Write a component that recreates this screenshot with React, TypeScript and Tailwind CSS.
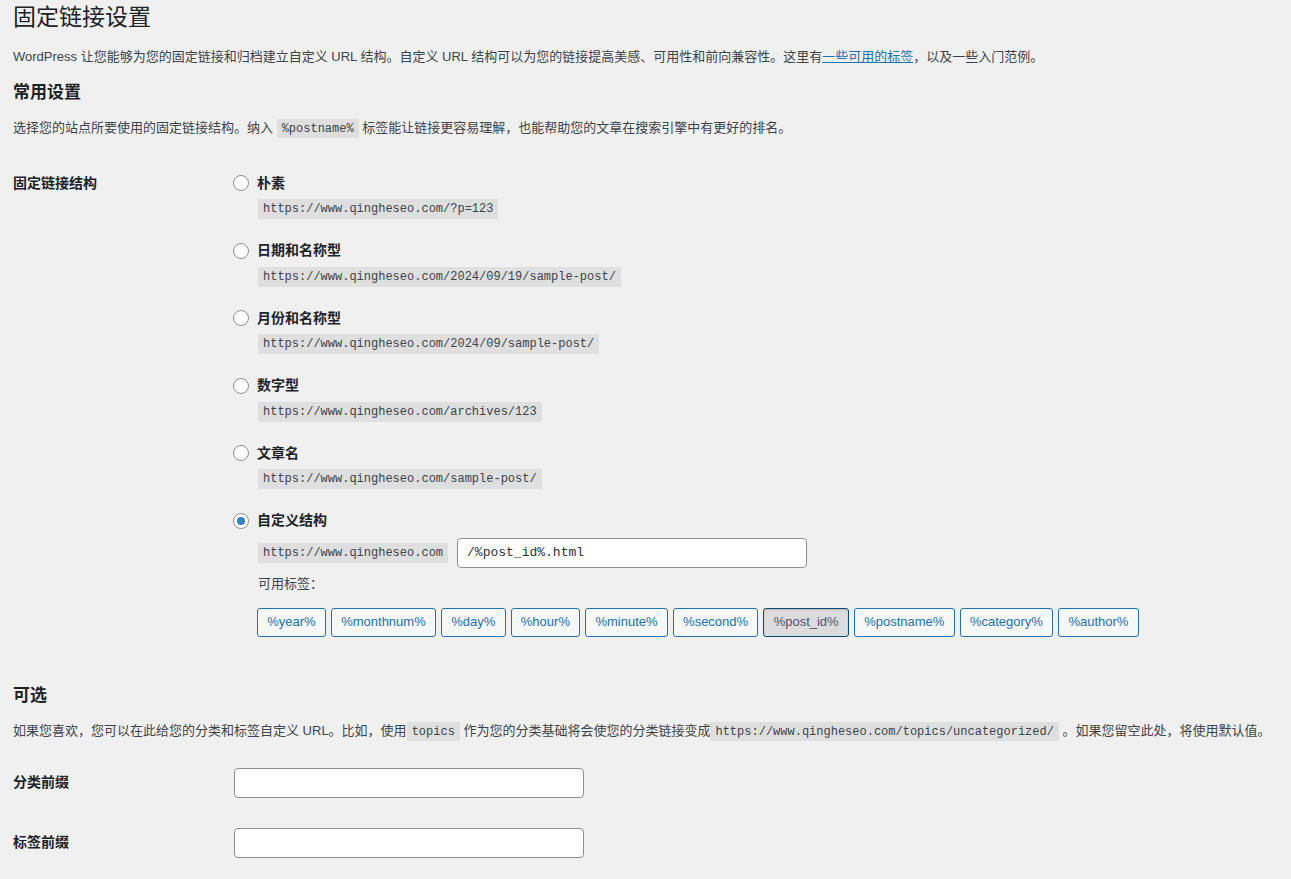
import React from 'react'

const SANS = 'font-["Liberation_Sans","Noto_Sans_CJK_SC",sans-serif]'

interface Option { label: string; url: string; checked?: boolean }

const options: Option[] = [
  { label: '朴素', url: 'https://www.qingheseo.com/?p=123' },
  { label: '日期和名称型', url: 'https://www.qingheseo.com/2024/09/19/sample-post/' },
  { label: '月份和名称型', url: 'https://www.qingheseo.com/2024/09/sample-post/' },
  { label: '数字型', url: 'https://www.qingheseo.com/archives/123' },
  { label: '文章名', url: 'https://www.qingheseo.com/sample-post/' },
]

const tags = ['%year%', '%monthnum%', '%day%', '%hour%', '%minute%', '%second%', '%post_id%', '%postname%', '%category%', '%author%']

function Code({ children }: { children: React.ReactNode }) {
  return (
    <code className='bg-[#dfdfe0] px-[5px] pt-[3px] pb-[2px] font-["Liberation_Mono",monospace] text-[12px] text-[#3c434a]'>
      {children}
    </code>
  )
}

function Radio({ checked }: { checked?: boolean }) {
  return (
    <span className="flex h-4 w-4 shrink-0 items-center justify-center rounded-full border border-[#8c8f94] bg-white">
      {checked && <span className="h-2 w-2 rounded-full bg-[#3582c4]" />}
    </span>
  )
}

export default function App() {
  return (
    <div className={`min-h-screen bg-[#f0f0f1] px-[13px] pt-[2px] text-[#3c434a] ${SANS}`}>
      <h1 className="text-[23px] font-normal leading-[30px] text-[#1d2327]">固定链接设置</h1>

      <p className="mt-[15px] text-[13px] leading-[20px]">
        WordPress 让您能够为您的固定链接和归档建立自定义 URL 结构。自定义 URL 结构可以为您的链接提高美感、可用性和前向兼容性。这里有
        <a className="text-[#2271b1] underline">一些可用的标签</a>，以及一些入门范例。
      </p>

      {/* 常用设置 */}
      <h2 className="mt-[15px] text-[17px] font-semibold leading-[22px] text-[#1d2327]">常用设置</h2>
      <p className="mt-[14px] text-[13px] leading-[20px]">
        选择您的站点所要使用的固定链接结构。纳入 <Code>%postname%</Code> 标签能让链接更容易理解，也能帮助您的文章在搜索引擎中有更好的排名。
      </p>

      <div className="mt-[34px] flex">
        <div className="w-[220px] shrink-0 text-[14px] font-semibold leading-[20px] text-[#1d2327]">固定链接结构</div>
        <div className="flex flex-col">
          {options.map(o => (
            <div key={o.label} className="mb-[21.5px] flex flex-col">
              <label className="flex h-5 items-center gap-2">
                <Radio />
                <span className="text-[14px] font-semibold text-[#1d2327]">{o.label}</span>
              </label>
              <div className="ml-[25px] mt-[6px] flex h-5 items-center self-start bg-[#dfdfe0] px-[5px] font-['Liberation_Mono',monospace] text-[12px] text-[#3c434a]">
                {o.url}
              </div>
            </div>
          ))}

          {/* 自定义结构 */}
          <div className="flex flex-col">
            <label className="flex h-5 items-center gap-2">
              <Radio checked />
              <span className="text-[14px] font-semibold text-[#1d2327]">自定义结构</span>
            </label>
            <div className="ml-[25px] mt-[7px] flex items-center gap-[9px]">
              <div className="flex h-5 items-center bg-[#dfdfe0] px-[5px] font-['Liberation_Mono',monospace] text-[12px] text-[#3c434a]">
                https://www.qingheseo.com
              </div>
              <div className="flex h-[30px] w-[350px] items-center rounded-[4px] border border-[#8c8f94] bg-white px-[9px] font-['Liberation_Mono',monospace] text-[13px] text-[#2c3338]">
                /%post_id%.html
              </div>
            </div>
            <div className="ml-[25px] mt-[6px] text-[13px] leading-[20px] text-[#3c434a]">可用标签：</div>
            <div className="ml-[24px] mt-[14px] flex gap-[5px]">
              {tags.map(t => (
                <button
                  key={t}
                  className={
                    t === '%post_id%'
                      ? 'h-[29px] rounded-[3px] border border-[#0a4b78] bg-[#dcdcde] px-[9.25px] text-[13px] text-[#50575e] shadow-[inset_0_1px_2px_rgba(0,0,0,0.15)]'
                      : 'h-[29px] rounded-[3px] border border-[#2271b1] bg-[#f6f7f7] px-[9.25px] text-[13px] text-[#2271b1]'
                  }
                >
                  {t}
                </button>
              ))}
            </div>
          </div>
        </div>
      </div>

      {/* 可选 */}
      <h2 className="mt-[48px] text-[17px] font-semibold leading-[22px] text-[#1d2327]">可选</h2>
      <p className="mt-[14px] text-[13px] leading-[20px]">
        如果您喜欢，您可以在此给您的分类和标签自定义 URL。比如，使用<Code>topics</Code> 作为您的分类基础将会使您的分类链接变成<Code>https://www.qingheseo.com/topics/uncategorized/</Code> 。如果您留空此处，将使用默认值。
      </p>

      <div className="mt-[26px] flex flex-col gap-[30px] pb-6">
        {['分类前缀', '标签前缀'].map(l => (
          <div key={l} className="flex items-center">
            <div className="w-[221px] shrink-0 text-[14px] font-semibold text-[#1d2327]">{l}</div>
            <input className="h-[30px] w-[350px] rounded-[4px] border border-[#8c8f94] bg-white px-2 text-[14px] outline-none" />
          </div>
        ))}
      </div>
    </div>
  )
}
